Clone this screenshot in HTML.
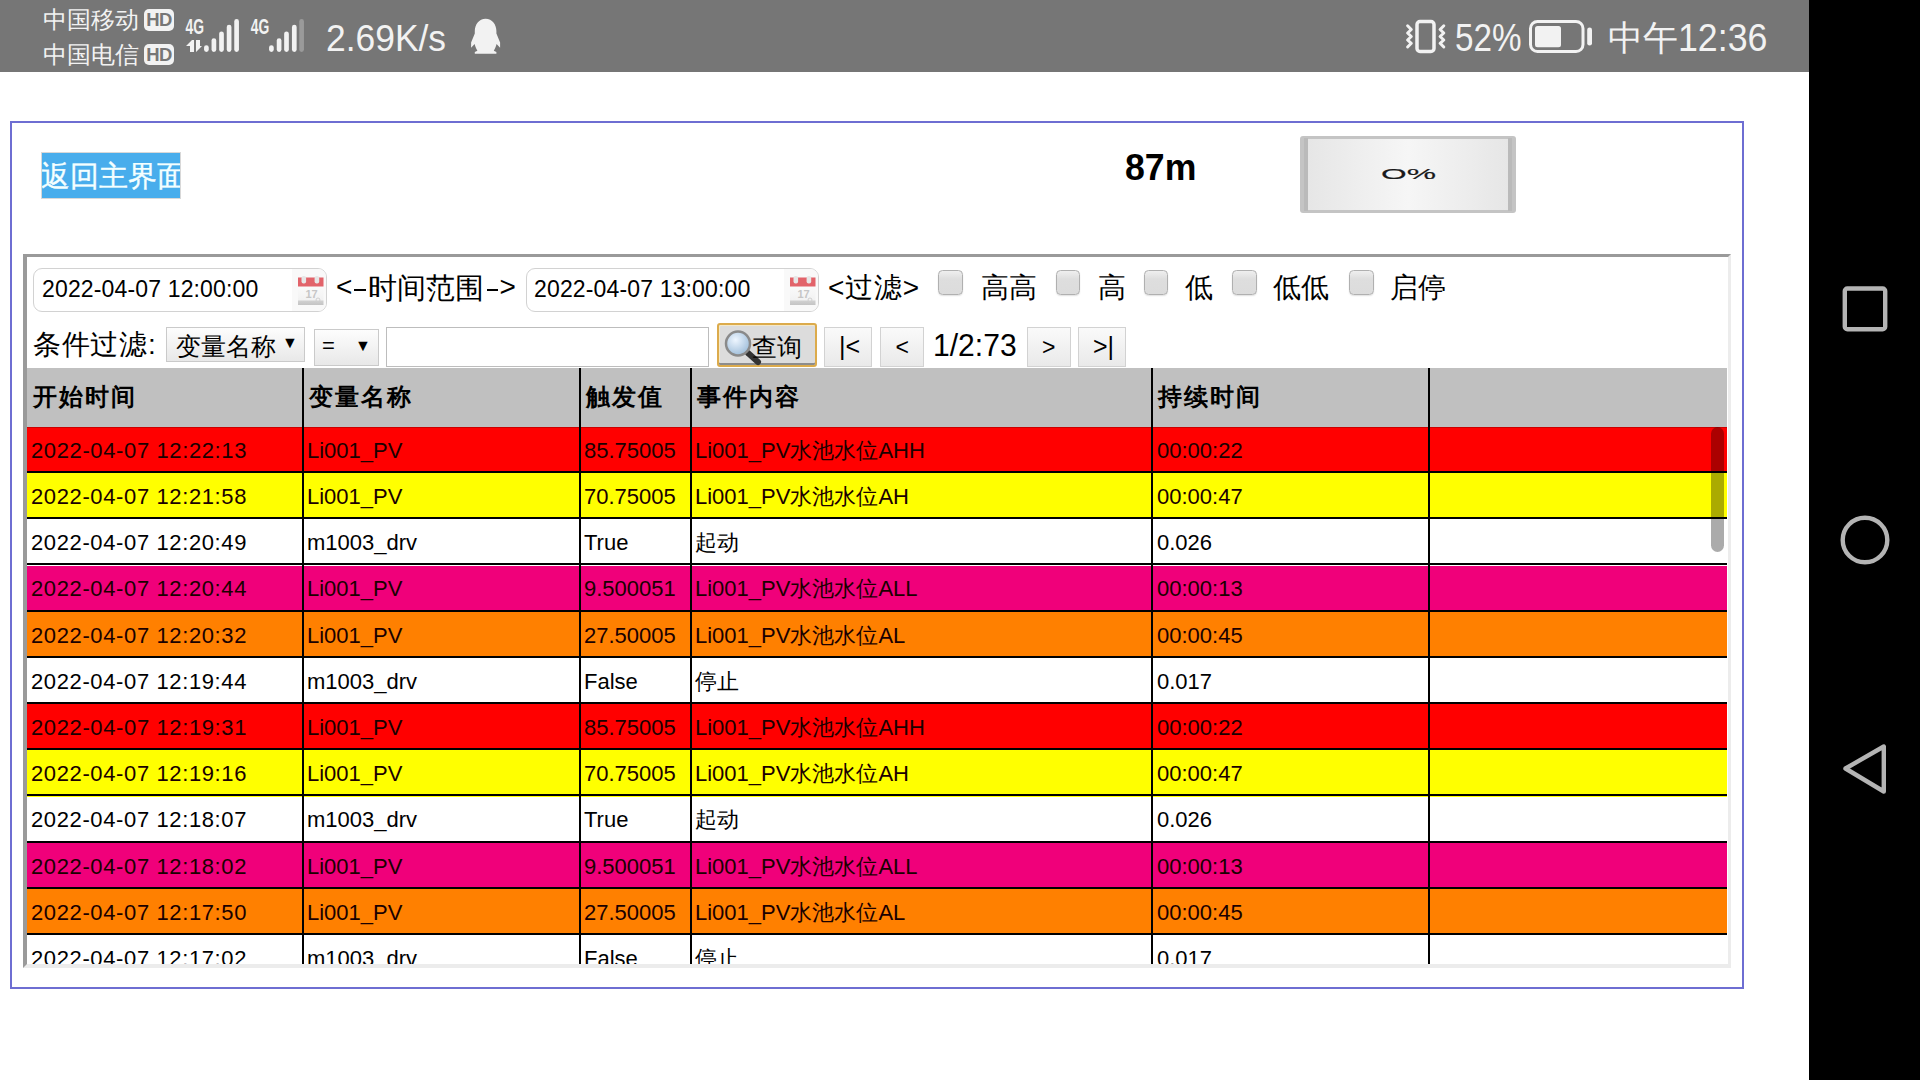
<!DOCTYPE html>
<html><head><meta charset="utf-8"><title>screen</title>
<style>
html,body{margin:0;padding:0}
body{width:1920px;height:1080px;position:relative;overflow:hidden;background:#fff;font-family:"Liberation Sans",sans-serif}
.t{position:absolute;white-space:nowrap}
</style></head><body>
<div style="position:absolute;left:0;top:0;width:1809px;height:72px;background:#767676"></div><div style="position:absolute;left:1809px;top:0;width:111px;height:1080px;background:#000"></div><div class="t" style="left:43px;top:5.18px;font-size:24px;line-height:29px;color:#f2f2f2;">中国移动</div>
<div class="t" style="left:43px;top:40.18px;font-size:24px;line-height:29px;color:#f2f2f2;">中国电信</div>
<div style="position:absolute;left:144px;top:9px;width:30px;height:21.5px;border-radius:5px;background:#f2f2f2;color:#767676;font:bold 18.5px/22px 'Liberation Sans',sans-serif;text-align:center;letter-spacing:-0.6px">HD</div><div style="position:absolute;left:144px;top:43.5px;width:30px;height:21.5px;border-radius:5px;background:#f2f2f2;color:#767676;font:bold 18.5px/22px 'Liberation Sans',sans-serif;text-align:center;letter-spacing:-0.6px">HD</div><svg style="position:absolute;left:0;top:0" width="1809" height="72">
<g fill="#f2f2f2" font-family="Liberation Sans" font-weight="bold">
<text x="185.5" y="34" font-size="21.8" textLength="18.5" lengthAdjust="spacingAndGlyphs">4G</text>
<text x="250.8" y="34" font-size="21.8" textLength="18.5" lengthAdjust="spacingAndGlyphs">4G</text>
</g>
<g stroke="#f2f2f2" stroke-linecap="round" stroke-width="4.7" fill="none">
<line x1="206.4" y1="47.6" x2="206.4" y2="49.6"/>
<line x1="213.9" y1="40.6" x2="213.9" y2="49.6"/>
<line x1="221.5" y1="33.8" x2="221.5" y2="49.6"/>
<line x1="229.1" y1="27.1" x2="229.1" y2="49.6"/>
<line x1="236.6" y1="21.4" x2="236.6" y2="49.6"/>
<line x1="271.4" y1="47.6" x2="271.4" y2="49.6"/>
<line x1="279.1" y1="40.6" x2="279.1" y2="49.6"/>
<line x1="286.5" y1="33.8" x2="286.5" y2="49.6"/>
<line x1="294.3" y1="27.1" x2="294.3" y2="49.6"/>
<line x1="301.6" y1="21.4" x2="301.6" y2="49.6" stroke="#9a9a9a"/>
</g>
<g fill="#f2f2f2">
<path d="M186 46 L192 40 L194 40 L194 52 L190 52 L190 46 Z"/>
<path d="M196 40 L200 40 L200 46 L202 46 L196 52 Z"/>
</g>
<path fill="#f2f2f2" d="M485.6 18.7 C479 18.7 474.8 24.5 474.8 31 L474.8 33.6 L471.1 42.5 L471.1 47.8 L474.6 44.1 C475.4 47 476.3 49 477.4 50.7 L474.8 51.9 L474.8 53.7 L496.4 53.7 L496.4 51.9 L493.8 50.7 C494.9 49 495.8 47 496.6 44.1 L500.1 47.8 L500.1 42.5 L496.4 33.6 L496.4 31 C496.4 24.5 492.2 18.7 485.6 18.7 Z"/>
<g fill="none" stroke="#f2f2f2" stroke-width="3" stroke-linejoin="round" stroke-linecap="round">
<rect x="1417" y="21.6" width="17" height="29.8" rx="3" stroke-width="3.5"/>
<path d="M1407.6 25.8 L1411.3 29.5 L1407.6 33 L1411.3 36.5 L1407.6 40 L1411.3 43.3 L1407.6 47" />
<path d="M1443.8 25.8 L1440.1 29.5 L1443.8 33 L1440.1 36.5 L1443.8 40 L1440.1 43.3 L1443.8 47" />
<rect x="1530.5" y="21.5" width="52.5" height="30" rx="7"/>
</g>
<rect x="1535" y="26" width="26" height="21.2" rx="2.5" fill="#f2f2f2"/>
<rect x="1587.2" y="27.4" width="4.8" height="18.2" rx="2.4" fill="#f2f2f2"/>
</svg><div class="t" style="left:326px;top:16.58px;font-size:37px;line-height:44px;color:#f2f2f2;transform-origin:0 0;transform:scaleX(0.957);">2.69K/s</div>
<div class="t" style="left:1455px;top:15.23px;font-size:38px;line-height:46px;color:#f2f2f2;transform-origin:0 0;transform:scaleX(0.875);">52%</div>
<div class="t" style="left:1607.5px;top:16.87px;font-size:35px;line-height:42px;color:#f2f2f2;">中午</div>
<div class="t" style="left:1678px;top:15.23px;font-size:38px;line-height:46px;color:#f2f2f2;transform-origin:0 0;transform:scaleX(0.94);">12:36</div>
<svg style="position:absolute;left:1809px;top:0" width="111" height="1080">
<g fill="none" stroke="#b4b4b4" stroke-width="4.4" stroke-linejoin="round">
<rect x="35.8" y="288.5" width="40.4" height="40.8" rx="2.6"/>
<circle cx="56" cy="540" r="22.3"/>
<path d="M36.5 768.5 L74.8 746.5 L74.8 791.5 Z"/>
</g></svg><div style="position:absolute;left:10px;top:121px;width:1730px;height:864px;border:2px solid #6e6ed2"></div><div style="position:absolute;left:41px;top:152px;width:138px;height:45px;border:1px solid #d8d8d8;background:#48adec;overflow:hidden"><div class="t" style="left:-1.5px;top:5.62px;font-size:28.5px;line-height:34px;color:#f4ffff;-webkit-text-stroke:0.35px #f4ffff;">返回主界面</div>
</div><div class="t" style="left:1124.5px;top:146.03px;font-size:36px;line-height:43px;color:#000;font-weight:bold;transform-origin:0 0;transform:scaleX(0.99);">87m</div>
<div style="position:absolute;left:1300px;top:136px;width:216px;height:77px;border-radius:3px;background:#c4c4c4"></div><div style="position:absolute;left:1304px;top:138px;width:4px;height:73px;background:#bababa"></div><div style="position:absolute;left:1508px;top:138px;width:4px;height:73px;background:#bababa"></div><div style="position:absolute;left:1308px;top:139px;width:200px;height:71px;background:linear-gradient(90deg,#e6e6e6,#f6f6f6 50%,#e6e6e6)"></div><div class="t" style="left:1380.5px;top:146.60px;font-size:30px;line-height:36px;color:#1a1a1a;transform-origin:0 100%;transform:scale(1.1,0.5);-webkit-text-stroke:0.3px #1a1a1a;">O%</div>
<div style="position:absolute;left:23px;top:254px;width:1701px;height:707px;border-style:solid;border-width:3px 3px 4px 4px;border-color:#9a9a9a #ececec #ececec #9a9a9a;background:#fff;overflow:hidden"></div><div style="position:absolute;left:33px;top:267.5px;width:291.5px;height:42.0px;border:1.5px solid #d2d2d2;border-radius:9px;background:#fff;overflow:hidden"><div style="position:absolute;right:0;top:0;width:34px;height:100%;background:#f9f9f9"></div></div><div class="t" style="left:42px;top:275.03px;font-size:23px;line-height:28px;color:#000;letter-spacing:0.15px;">2022-04-07 12:00:00</div>
<svg style="position:absolute;left:296.5px;top:276px" width="28" height="30" viewBox="0 0 28 30">
<defs><linearGradient id="cb296" x1="0" y1="0" x2="0" y2="1"><stop offset="0" stop-color="#fbfbfb"/><stop offset="0.75" stop-color="#f2f2f2"/><stop offset="0.8" stop-color="#d0d0d0"/><stop offset="1" stop-color="#c4c4c4"/></linearGradient></defs>
<rect x="1" y="9" width="25.5" height="20" fill="url(#cb296)"/>
<rect x="1" y="1.5" width="25.5" height="9" fill="#e2636a"/>
<rect x="4.5" y="0" width="4.6" height="7.5" rx="2" fill="#e6e6e6"/><rect x="17.6" y="0" width="4.6" height="7.5" rx="2" fill="#e6e6e6"/>
<text x="8.5" y="21.5" font-family="Liberation Sans" font-weight="bold" font-size="11" fill="#c6c6c6">17</text>
<circle cx="21" cy="24" r="2" fill="none" stroke="#d0d0d0" stroke-width="1"/>
</svg><div class="t" style="left:336px;top:270.30px;font-size:28px;line-height:34px;color:#000;">&lt;</div>
<div style="position:absolute;left:354.4px;top:288.6px;width:11.2px;height:2.2px;background:#000"></div><div class="t" style="left:368px;top:270.62px;font-size:28.5px;line-height:34px;color:#000;">时间范围</div>
<div style="position:absolute;left:486.6px;top:288.6px;width:11.2px;height:2.2px;background:#000"></div><div class="t" style="left:499.5px;top:270.30px;font-size:28px;line-height:34px;color:#000;">&gt;</div>
<div style="position:absolute;left:526px;top:268px;width:290.5px;height:41.5px;border:1.5px solid #d2d2d2;border-radius:9px;background:#fff;overflow:hidden"><div style="position:absolute;right:0;top:0;width:34px;height:100%;background:#f9f9f9"></div></div><div class="t" style="left:534px;top:275.03px;font-size:23px;line-height:28px;color:#000;letter-spacing:0.15px;">2022-04-07 13:00:00</div>
<svg style="position:absolute;left:788.5px;top:276px" width="28" height="30" viewBox="0 0 28 30">
<defs><linearGradient id="cb788" x1="0" y1="0" x2="0" y2="1"><stop offset="0" stop-color="#fbfbfb"/><stop offset="0.75" stop-color="#f2f2f2"/><stop offset="0.8" stop-color="#d0d0d0"/><stop offset="1" stop-color="#c4c4c4"/></linearGradient></defs>
<rect x="1" y="9" width="25.5" height="20" fill="url(#cb788)"/>
<rect x="1" y="1.5" width="25.5" height="9" fill="#e2636a"/>
<rect x="4.5" y="0" width="4.6" height="7.5" rx="2" fill="#e6e6e6"/><rect x="17.6" y="0" width="4.6" height="7.5" rx="2" fill="#e6e6e6"/>
<text x="8.5" y="21.5" font-family="Liberation Sans" font-weight="bold" font-size="11" fill="#c6c6c6">17</text>
<circle cx="21" cy="24" r="2" fill="none" stroke="#d0d0d0" stroke-width="1"/>
</svg><div class="t" style="left:828px;top:271.30px;font-size:28px;line-height:34px;color:#000;letter-spacing:0.8px;">&lt;过滤&gt;</div>
<div style="position:absolute;left:938.3px;top:270px;width:22.5px;height:22.5px;border:1.5px solid #b0b0b0;border-radius:4.5px;background:linear-gradient(#efefef,#dedede 35%,#dcdcdc);box-shadow:0 1px 1.5px rgba(0,0,0,0.12)"></div><div style="position:absolute;left:1055.8px;top:270px;width:22.5px;height:22.5px;border:1.5px solid #b0b0b0;border-radius:4.5px;background:linear-gradient(#efefef,#dedede 35%,#dcdcdc);box-shadow:0 1px 1.5px rgba(0,0,0,0.12)"></div><div style="position:absolute;left:1143.5px;top:270px;width:22.5px;height:22.5px;border:1.5px solid #b0b0b0;border-radius:4.5px;background:linear-gradient(#efefef,#dedede 35%,#dcdcdc);box-shadow:0 1px 1.5px rgba(0,0,0,0.12)"></div><div style="position:absolute;left:1232.2px;top:270px;width:22.5px;height:22.5px;border:1.5px solid #b0b0b0;border-radius:4.5px;background:linear-gradient(#efefef,#dedede 35%,#dcdcdc);box-shadow:0 1px 1.5px rgba(0,0,0,0.12)"></div><div style="position:absolute;left:1349.4px;top:270px;width:22.5px;height:22.5px;border:1.5px solid #b0b0b0;border-radius:4.5px;background:linear-gradient(#efefef,#dedede 35%,#dcdcdc);box-shadow:0 1px 1.5px rgba(0,0,0,0.12)"></div><div class="t" style="left:980.5px;top:271.30px;font-size:28px;line-height:34px;color:#000;letter-spacing:0.5px;">高高</div>
<div class="t" style="left:1097.5px;top:271.30px;font-size:28px;line-height:34px;color:#000;letter-spacing:0.5px;">高</div>
<div class="t" style="left:1184.5px;top:271.30px;font-size:28px;line-height:34px;color:#000;letter-spacing:0.5px;">低</div>
<div class="t" style="left:1272.5px;top:271.30px;font-size:28px;line-height:34px;color:#000;letter-spacing:0.5px;">低低</div>
<div class="t" style="left:1389.5px;top:271.30px;font-size:28px;line-height:34px;color:#000;letter-spacing:0.5px;">启停</div>
<div class="t" style="left:33px;top:328.30px;font-size:28px;line-height:34px;color:#000;letter-spacing:0.6px;">条件过滤</div>
<div class="t" style="left:148px;top:328.30px;font-size:28px;line-height:34px;color:#000;">:</div>
<div style="position:absolute;left:166px;top:326.5px;width:137px;height:33.5px;border:1px solid #cacaca;background:linear-gradient(#fdfdfd,#e8e8e8)"></div><div class="t" style="left:175.5px;top:331.34px;font-size:25px;line-height:30px;color:#000;">变量名称</div>
<div class="t" style="left:282px;top:332.96px;font-size:16px;line-height:19px;color:#000;">▼</div>
<div style="position:absolute;left:313.5px;top:329px;width:63px;height:34.5px;border:1px solid #cacaca;background:linear-gradient(#fdfdfd,#e8e8e8)"></div><div class="t" style="left:322px;top:333.38px;font-size:22px;line-height:26px;color:#000;">=</div>
<div class="t" style="left:355px;top:335.96px;font-size:16px;line-height:19px;color:#000;">▼</div>
<div style="position:absolute;left:386px;top:326.5px;width:321px;height:38px;border:1px solid #bdbdbd;background:#fff"></div><div style="position:absolute;left:716.5px;top:323.3px;width:96.5px;height:40px;border:2px solid #dcab4c;border-radius:3px;background:#dcdcdc;box-shadow:inset 0 -2px 0 #8c8c8c, inset 1px 1px 0 #f4e8c8"></div><svg style="position:absolute;left:722px;top:329px" width="42" height="38" viewBox="0 0 42 38">
<defs><radialGradient id="mg" cx="0.4" cy="0.35" r="0.7"><stop offset="0" stop-color="#eef6ff"/><stop offset="1" stop-color="#9bbbd8"/></radialGradient></defs>
<line x1="26" y1="24" x2="36" y2="33" stroke="#333" stroke-width="6" stroke-linecap="round"/>
<circle cx="16" cy="14.5" r="12" fill="url(#mg)" stroke="#8a8a8a" stroke-width="2.5"/>
</svg><div class="t" style="left:752px;top:331.84px;font-size:25px;line-height:30px;color:#000;">查询</div>
<div style="position:absolute;left:824.3px;top:327.2px;width:46.2px;height:37.4px;border:1px solid #d2d2d2;background:linear-gradient(#fafafa,#e9e9e9)"></div><div class="t" style="left:839px;top:331.34px;font-size:25px;line-height:30px;color:#000;">|&lt;</div>
<div style="position:absolute;left:880.2px;top:327.2px;width:42.0px;height:37.4px;border:1px solid #d2d2d2;background:linear-gradient(#fafafa,#e9e9e9)"></div><div class="t" style="left:895.5px;top:333.03px;font-size:23px;line-height:28px;color:#000;">&lt;</div>
<div style="position:absolute;left:1027px;top:327.2px;width:41.6px;height:37.4px;border:1px solid #d2d2d2;background:linear-gradient(#fafafa,#e9e9e9)"></div><div class="t" style="left:1042px;top:333.03px;font-size:23px;line-height:28px;color:#000;">&gt;</div>
<div style="position:absolute;left:1078.2px;top:327.2px;width:46.2px;height:37.4px;border:1px solid #d2d2d2;background:linear-gradient(#fafafa,#e9e9e9)"></div><div class="t" style="left:1093px;top:331.34px;font-size:25px;line-height:30px;color:#000;">&gt;|</div>
<div class="t" style="left:933px;top:326.86px;font-size:31px;line-height:37px;color:#000;transform-origin:0 0;transform:scaleX(0.97);">1/2:73</div>
<div style="position:absolute;left:27px;top:368px;width:1700px;height:59px;background:#c0c0c0"></div><div style="position:absolute;left:302px;top:368px;width:2px;height:59px;background:#000"></div><div style="position:absolute;left:579px;top:368px;width:2px;height:59px;background:#000"></div><div style="position:absolute;left:690px;top:368px;width:2px;height:59px;background:#000"></div><div style="position:absolute;left:1151px;top:368px;width:2px;height:59px;background:#000"></div><div style="position:absolute;left:1428px;top:368px;width:2px;height:59px;background:#000"></div><div class="t" style="left:32.5px;top:381.98px;font-size:24px;line-height:29px;color:#000;font-weight:bold;letter-spacing:2.1px;">开始时间</div>
<div class="t" style="left:308.5px;top:381.98px;font-size:24px;line-height:29px;color:#000;font-weight:bold;letter-spacing:2.1px;">变量名称</div>
<div class="t" style="left:585.5px;top:381.98px;font-size:24px;line-height:29px;color:#000;font-weight:bold;letter-spacing:2.1px;">触发值</div>
<div class="t" style="left:696.5px;top:381.98px;font-size:24px;line-height:29px;color:#000;font-weight:bold;letter-spacing:2.1px;">事件内容</div>
<div class="t" style="left:1157.5px;top:381.98px;font-size:24px;line-height:29px;color:#000;font-weight:bold;letter-spacing:2.1px;">持续时间</div>
<div style="position:absolute;left:27px;top:257px;width:1700px;height:707px;overflow:hidden"><div style="position:absolute;left:0;top:170.00px;width:1700px;height:46.20px;background:#ff0000"></div><div style="position:absolute;left:0;top:214.00px;width:1700px;height:2px;background:#000"></div><div class="t" style="left:4px;top:180.88px;font-size:22px;line-height:26px;color:#1a0000;letter-spacing:0.62px;">2022-04-07 12:22:13</div>
<div class="t" style="left:280px;top:180.88px;font-size:22px;line-height:26px;color:#1a0000;">Li001_PV</div>
<div class="t" style="left:557px;top:180.88px;font-size:22px;line-height:26px;color:#1a0000;">85.75005</div>
<div class="t" style="left:668px;top:180.88px;font-size:22px;line-height:26px;color:#1a0000;">Li001_PV水池水位AHH</div>
<div class="t" style="left:1130px;top:180.88px;font-size:22px;line-height:26px;color:#1a0000;">00:00:22</div>
<div style="position:absolute;left:0;top:216.20px;width:1700px;height:46.20px;background:#ffff00"></div><div style="position:absolute;left:0;top:260.20px;width:1700px;height:2px;background:#000"></div><div class="t" style="left:4px;top:227.08px;font-size:22px;line-height:26px;color:#1a0000;letter-spacing:0.62px;">2022-04-07 12:21:58</div>
<div class="t" style="left:280px;top:227.08px;font-size:22px;line-height:26px;color:#1a0000;">Li001_PV</div>
<div class="t" style="left:557px;top:227.08px;font-size:22px;line-height:26px;color:#1a0000;">70.75005</div>
<div class="t" style="left:668px;top:227.08px;font-size:22px;line-height:26px;color:#1a0000;">Li001_PV水池水位AH</div>
<div class="t" style="left:1130px;top:227.08px;font-size:22px;line-height:26px;color:#1a0000;">00:00:47</div>
<div style="position:absolute;left:0;top:262.40px;width:1700px;height:46.20px;background:#ffffff"></div><div style="position:absolute;left:0;top:306.40px;width:1700px;height:2px;background:#000"></div><div class="t" style="left:4px;top:273.28px;font-size:22px;line-height:26px;color:#000;letter-spacing:0.62px;">2022-04-07 12:20:49</div>
<div class="t" style="left:280px;top:273.28px;font-size:22px;line-height:26px;color:#000;">m1003_drv</div>
<div class="t" style="left:557px;top:273.28px;font-size:22px;line-height:26px;color:#000;">True</div>
<div class="t" style="left:668px;top:273.28px;font-size:22px;line-height:26px;color:#000;">起动</div>
<div class="t" style="left:1130px;top:273.28px;font-size:22px;line-height:26px;color:#000;">0.026</div>
<div style="position:absolute;left:0;top:308.60px;width:1700px;height:46.20px;background:#f0007a"></div><div style="position:absolute;left:0;top:352.60px;width:1700px;height:2px;background:#000"></div><div class="t" style="left:4px;top:319.48px;font-size:22px;line-height:26px;color:#1a0000;letter-spacing:0.62px;">2022-04-07 12:20:44</div>
<div class="t" style="left:280px;top:319.48px;font-size:22px;line-height:26px;color:#1a0000;">Li001_PV</div>
<div class="t" style="left:557px;top:319.48px;font-size:22px;line-height:26px;color:#1a0000;">9.500051</div>
<div class="t" style="left:668px;top:319.48px;font-size:22px;line-height:26px;color:#1a0000;">Li001_PV水池水位ALL</div>
<div class="t" style="left:1130px;top:319.48px;font-size:22px;line-height:26px;color:#1a0000;">00:00:13</div>
<div style="position:absolute;left:0;top:354.80px;width:1700px;height:46.20px;background:#ff8000"></div><div style="position:absolute;left:0;top:398.80px;width:1700px;height:2px;background:#000"></div><div class="t" style="left:4px;top:365.68px;font-size:22px;line-height:26px;color:#1a0000;letter-spacing:0.62px;">2022-04-07 12:20:32</div>
<div class="t" style="left:280px;top:365.68px;font-size:22px;line-height:26px;color:#1a0000;">Li001_PV</div>
<div class="t" style="left:557px;top:365.68px;font-size:22px;line-height:26px;color:#1a0000;">27.50005</div>
<div class="t" style="left:668px;top:365.68px;font-size:22px;line-height:26px;color:#1a0000;">Li001_PV水池水位AL</div>
<div class="t" style="left:1130px;top:365.68px;font-size:22px;line-height:26px;color:#1a0000;">00:00:45</div>
<div style="position:absolute;left:0;top:401.00px;width:1700px;height:46.20px;background:#ffffff"></div><div style="position:absolute;left:0;top:445.00px;width:1700px;height:2px;background:#000"></div><div class="t" style="left:4px;top:411.88px;font-size:22px;line-height:26px;color:#000;letter-spacing:0.62px;">2022-04-07 12:19:44</div>
<div class="t" style="left:280px;top:411.88px;font-size:22px;line-height:26px;color:#000;">m1003_drv</div>
<div class="t" style="left:557px;top:411.88px;font-size:22px;line-height:26px;color:#000;">False</div>
<div class="t" style="left:668px;top:411.88px;font-size:22px;line-height:26px;color:#000;">停止</div>
<div class="t" style="left:1130px;top:411.88px;font-size:22px;line-height:26px;color:#000;">0.017</div>
<div style="position:absolute;left:0;top:447.20px;width:1700px;height:46.20px;background:#ff0000"></div><div style="position:absolute;left:0;top:491.20px;width:1700px;height:2px;background:#000"></div><div class="t" style="left:4px;top:458.08px;font-size:22px;line-height:26px;color:#1a0000;letter-spacing:0.62px;">2022-04-07 12:19:31</div>
<div class="t" style="left:280px;top:458.08px;font-size:22px;line-height:26px;color:#1a0000;">Li001_PV</div>
<div class="t" style="left:557px;top:458.08px;font-size:22px;line-height:26px;color:#1a0000;">85.75005</div>
<div class="t" style="left:668px;top:458.08px;font-size:22px;line-height:26px;color:#1a0000;">Li001_PV水池水位AHH</div>
<div class="t" style="left:1130px;top:458.08px;font-size:22px;line-height:26px;color:#1a0000;">00:00:22</div>
<div style="position:absolute;left:0;top:493.40px;width:1700px;height:46.20px;background:#ffff00"></div><div style="position:absolute;left:0;top:537.40px;width:1700px;height:2px;background:#000"></div><div class="t" style="left:4px;top:504.28px;font-size:22px;line-height:26px;color:#1a0000;letter-spacing:0.62px;">2022-04-07 12:19:16</div>
<div class="t" style="left:280px;top:504.28px;font-size:22px;line-height:26px;color:#1a0000;">Li001_PV</div>
<div class="t" style="left:557px;top:504.28px;font-size:22px;line-height:26px;color:#1a0000;">70.75005</div>
<div class="t" style="left:668px;top:504.28px;font-size:22px;line-height:26px;color:#1a0000;">Li001_PV水池水位AH</div>
<div class="t" style="left:1130px;top:504.28px;font-size:22px;line-height:26px;color:#1a0000;">00:00:47</div>
<div style="position:absolute;left:0;top:539.60px;width:1700px;height:46.20px;background:#ffffff"></div><div style="position:absolute;left:0;top:583.60px;width:1700px;height:2px;background:#000"></div><div class="t" style="left:4px;top:550.48px;font-size:22px;line-height:26px;color:#000;letter-spacing:0.62px;">2022-04-07 12:18:07</div>
<div class="t" style="left:280px;top:550.48px;font-size:22px;line-height:26px;color:#000;">m1003_drv</div>
<div class="t" style="left:557px;top:550.48px;font-size:22px;line-height:26px;color:#000;">True</div>
<div class="t" style="left:668px;top:550.48px;font-size:22px;line-height:26px;color:#000;">起动</div>
<div class="t" style="left:1130px;top:550.48px;font-size:22px;line-height:26px;color:#000;">0.026</div>
<div style="position:absolute;left:0;top:585.80px;width:1700px;height:46.20px;background:#f0007a"></div><div style="position:absolute;left:0;top:629.80px;width:1700px;height:2px;background:#000"></div><div class="t" style="left:4px;top:596.68px;font-size:22px;line-height:26px;color:#1a0000;letter-spacing:0.62px;">2022-04-07 12:18:02</div>
<div class="t" style="left:280px;top:596.68px;font-size:22px;line-height:26px;color:#1a0000;">Li001_PV</div>
<div class="t" style="left:557px;top:596.68px;font-size:22px;line-height:26px;color:#1a0000;">9.500051</div>
<div class="t" style="left:668px;top:596.68px;font-size:22px;line-height:26px;color:#1a0000;">Li001_PV水池水位ALL</div>
<div class="t" style="left:1130px;top:596.68px;font-size:22px;line-height:26px;color:#1a0000;">00:00:13</div>
<div style="position:absolute;left:0;top:632.00px;width:1700px;height:46.20px;background:#ff8000"></div><div style="position:absolute;left:0;top:676.00px;width:1700px;height:2px;background:#000"></div><div class="t" style="left:4px;top:642.88px;font-size:22px;line-height:26px;color:#1a0000;letter-spacing:0.62px;">2022-04-07 12:17:50</div>
<div class="t" style="left:280px;top:642.88px;font-size:22px;line-height:26px;color:#1a0000;">Li001_PV</div>
<div class="t" style="left:557px;top:642.88px;font-size:22px;line-height:26px;color:#1a0000;">27.50005</div>
<div class="t" style="left:668px;top:642.88px;font-size:22px;line-height:26px;color:#1a0000;">Li001_PV水池水位AL</div>
<div class="t" style="left:1130px;top:642.88px;font-size:22px;line-height:26px;color:#1a0000;">00:00:45</div>
<div style="position:absolute;left:0;top:678.20px;width:1700px;height:46.20px;background:#ffffff"></div><div style="position:absolute;left:0;top:722.20px;width:1700px;height:2px;background:#000"></div><div class="t" style="left:4px;top:689.08px;font-size:22px;line-height:26px;color:#000;letter-spacing:0.62px;">2022-04-07 12:17:02</div>
<div class="t" style="left:280px;top:689.08px;font-size:22px;line-height:26px;color:#000;">m1003_drv</div>
<div class="t" style="left:557px;top:689.08px;font-size:22px;line-height:26px;color:#000;">False</div>
<div class="t" style="left:668px;top:689.08px;font-size:22px;line-height:26px;color:#000;">停止</div>
<div class="t" style="left:1130px;top:689.08px;font-size:22px;line-height:26px;color:#000;">0.017</div>
<div style="position:absolute;left:0;top:170px;width:1700px;height:1px;background:rgba(0,0,0,0.2)"></div><div style="position:absolute;left:275px;top:170px;width:2px;height:600px;background:#000"></div><div style="position:absolute;left:552px;top:170px;width:2px;height:600px;background:#000"></div><div style="position:absolute;left:663px;top:170px;width:2px;height:600px;background:#000"></div><div style="position:absolute;left:1124px;top:170px;width:2px;height:600px;background:#000"></div><div style="position:absolute;left:1401px;top:170px;width:2px;height:600px;background:#000"></div></div><div style="position:absolute;left:1711px;top:427px;width:13px;height:124.5px;border-radius:6.5px;background:rgba(0,0,0,0.33)"></div>
</body></html>
